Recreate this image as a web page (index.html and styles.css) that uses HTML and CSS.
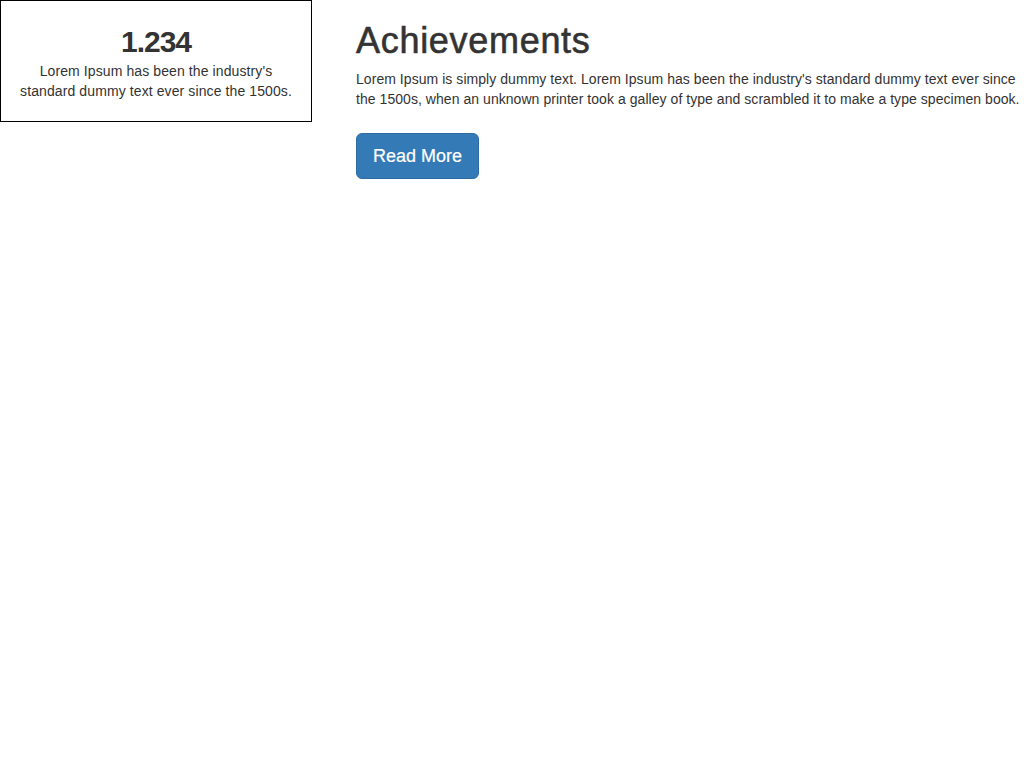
FILE: index.html
```html
<!DOCTYPE html>
<html>
<head>
<meta charset="utf-8">
<link rel="stylesheet" href="styles.css">
</head>
<body>
<div class="row">
  <div class="stat">
    <h3 class="stat-num">1.234</h3>
    <p class="stat-text">Lorem Ipsum has been the industry's<br>standard dummy text ever since the 1500s.</p>
  </div>
  <div class="main">
    <h1 class="title">Achievements</h1>
    <p class="lead">Lorem Ipsum is simply dummy text. Lorem Ipsum has been the industry's standard dummy text ever since the 1500s, when an unknown printer took a galley of type and scrambled it to make a type specimen book.</p>
    <a class="btn" href="#">Read More</a>
  </div>
</div>
</body>
</html>
```
FILE: styles.css
```css
html, body {
  margin: 0;
  padding: 0;
  background: #fff;
}
body {
  font-family: "Liberation Sans", Arial, sans-serif;
  font-size: 14px;
  line-height: 20px;
  color: #333;
  letter-spacing: 0.1px;
}
.row {
  display: flex;
  align-items: flex-start;
  gap: 44px;
}
.stat {
  width: 310px;
  flex: none;
  border: 1px solid #000;
  padding: 24px 0 20px;
  text-align: center;
}
.stat-num {
  margin: 0;
  font-size: 30px;
  line-height: 33px;
  font-weight: 700;
  letter-spacing: -1px;
}
.stat-text {
  margin: 3px 0 0;
}
.main {
  width: 668px;
  flex: none;
}
.title {
  margin: 21px 0 8px;
  font-size: 36px;
  line-height: 40px;
  font-weight: 400;
  letter-spacing: 0.7px;
  -webkit-text-stroke: 0.6px #333;
}
.lead {
  margin: 0;
  letter-spacing: 0.05px;
}
.btn {
  display: inline-block;
  margin-top: 24px;
  padding: 10px 16px;
  font-size: 18px;
  line-height: 24px;
  letter-spacing: 0;
  color: #fff;
  background: #337ab7;
  border: 1px solid #2e6da4;
  border-radius: 6px;
  text-decoration: none;
  -webkit-text-stroke: 0.2px #fff;
}
```
